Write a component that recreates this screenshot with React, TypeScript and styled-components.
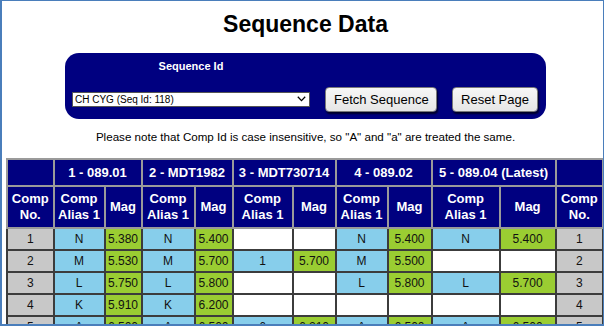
import React from "react";
import styled, { createGlobalStyle } from "styled-components";

const Global = createGlobalStyle`
  html, body { margin: 0; padding: 0; background: #fff; }
  body { font-family: "Liberation Sans", Arial, sans-serif; }
`;

const Frame = styled.div`
  height: 326px;
  box-sizing: border-box;
  border: 2px solid #4a7ebb;
  border-top-width: 1px;
  border-right-width: 1px;
  overflow: hidden;
  font-family: "Liberation Sans", Arial, sans-serif;
`;

const Top = styled.div`
  padding-left: 6px;
  display: flex;
  flex-direction: column;
  align-items: center;
`;

const Title = styled.h1`
  margin: 10px 0 0;
  font-size: 23px;
  line-height: 26px;
  font-weight: bold;
  color: #000;
`;

const Panel = styled.div`
  margin-top: 16px;
  width: 481px;
  box-sizing: border-box;
  background: #000080;
  border-radius: 14px;
  padding: 7px 8px 7px 7px;
  display: grid;
  grid-template-columns: 238px 112px auto;
  column-gap: 15px;
  row-gap: 14px;
  align-items: center;
`;

const Label = styled.div`
  color: #fff;
  font-size: 11px;
  line-height: 13px;
  font-weight: bold;
  text-align: center;
  grid-column: 1;
`;

const SelectWrap = styled.div`
  position: relative;
  grid-column: 1;
  height: 15px;
`;

const Select = styled.select`
  appearance: none;
  width: 100%;
  height: 15px;
  box-sizing: border-box;
  border: 1px solid #555;
  border-radius: 0;
  background: #fff;
  font-family: "Liberation Sans", Arial, sans-serif;
  font-size: 10px;
  line-height: 13px;
  padding: 0 0 0 2px;
  margin: 0;
  color: #000;
  display: block;
`;

const Chevron = styled.svg`
  position: absolute;
  right: 4px;
  top: 4px;
  pointer-events: none;
`;

const Button = styled.button`
  height: 25px;
  box-sizing: border-box;
  padding: 0 8px;
  border: 1px solid #7a7a7a;
  border-radius: 4px;
  background: linear-gradient(#f6f6f6, #e6e6e6);
  box-shadow: 1px 2px 2px rgba(0, 0, 0, 0.7);
  font-family: "Liberation Sans", Arial, sans-serif;
  font-size: 13px;
  color: #000;
  white-space: nowrap;
`;

const Note = styled.p`
  margin: 11px 0 0;
  font-size: 11.6px;
  line-height: 14px;
  color: #000;
`;

const Table = styled.table`
  margin: 14px 0 0 4px;
  width: 596px;
  table-layout: fixed;
  border-collapse: collapse;
  border: 2px solid #9a9a9a;
  font-family: "Liberation Sans", Arial, sans-serif;
`;

const HeadCell = styled.th<{ $tall?: boolean }>`
  background: #000080;
  color: #fff;
  border: 2px solid #9a9a9a;
  font-size: 13px;
  font-weight: bold;
  line-height: 16px;
  height: ${(p) => (p.$tall ? "40px" : "25px")};
  padding: 0;
  text-align: center;
  white-space: nowrap;
`;

type Kind = "num" | "alias" | "mag" | "empty";

const bg: Record<Kind, string> = {
  num: "#c8c8c8",
  alias: "#87ceeb",
  mag: "#9acd32",
  empty: "#ffffff",
};

const Cell = styled.td<{ $kind: Kind }>`
  background: ${(p) => bg[p.$kind]};
  border: 2px solid #3c3c3c;
  font-size: 12px;
  height: 20px;
  padding: 0;
  text-align: center;
  color: #111;
`;

const widths = [46.5, 51, 37, 53, 38, 60, 43, 52, 44, 68, 56, 47.5];

const versions = ["1 - 089.01", "2 - MDT1982", "3 - MDT730714", "4 - 089.02", "5 - 089.04 (Latest)"];

type Pair = [string, string] | null;

const rows: { n: string; pairs: Pair[] }[] = [
  { n: "1", pairs: [["N", "5.380"], ["N", "5.400"], null, ["N", "5.400"], ["N", "5.400"]] },
  { n: "2", pairs: [["M", "5.530"], ["M", "5.700"], ["1", "5.700"], ["M", "5.500"], null] },
  { n: "3", pairs: [["L", "5.750"], ["L", "5.800"], null, ["L", "5.800"], ["L", "5.700"]] },
  { n: "4", pairs: [["K", "5.910"], ["K", "6.200"], null, null, null] },
  { n: "5", pairs: [["A", "6.500"], ["A", "6.500"], ["6", "6.210"], ["A", "6.500"], ["A", "6.500"]] },
];

export default function App() {
  return (
    <Frame>
      <Global />
      <Top>
        <Title>Sequence Data</Title>
        <Panel>
          <Label>Sequence Id</Label>
          <span />
          <span />
          <SelectWrap>
            <Select defaultValue="118">
              <option value="118">CH CYG (Seq Id: 118)</option>
            </Select>
            <Chevron width="9" height="6" viewBox="0 0 9 6">
              <path d="M0.8 0.8 L4.5 4.6 L8.2 0.8" fill="none" stroke="#000" strokeWidth="1.3" />
            </Chevron>
          </SelectWrap>
          <Button>Fetch Sequence</Button>
          <Button>Reset Page</Button>
        </Panel>
        <Note>Please note that Comp Id is case insensitive, so "A" and "a" are treated the same.</Note>
      </Top>
      <Table>
        <colgroup>
          {widths.map((w, i) => (
            <col key={i} style={{ width: `${w}px` }} />
          ))}
        </colgroup>
        <thead>
          <tr>
            <HeadCell />
            {versions.map((v) => (
              <HeadCell key={v} colSpan={2}>
                {v}
              </HeadCell>
            ))}
            <HeadCell />
          </tr>
          <tr>
            <HeadCell $tall>
              Comp
              <br />
              No.
            </HeadCell>
            {versions.map((v) => (
              <React.Fragment key={v}>
                <HeadCell $tall>
                  Comp
                  <br />
                  Alias 1
                </HeadCell>
                <HeadCell $tall>Mag</HeadCell>
              </React.Fragment>
            ))}
            <HeadCell $tall>
              Comp
              <br />
              No.
            </HeadCell>
          </tr>
        </thead>
        <tbody>
          {rows.map((r) => (
            <tr key={r.n}>
              <Cell $kind="num">{r.n}</Cell>
              {r.pairs.map((p, i) => (
                <React.Fragment key={i}>
                  <Cell $kind={p ? "alias" : "empty"}>{p ? p[0] : ""}</Cell>
                  <Cell $kind={p ? "mag" : "empty"}>{p ? p[1] : ""}</Cell>
                </React.Fragment>
              ))}
              <Cell $kind="num">{r.n}</Cell>
            </tr>
          ))}
        </tbody>
      </Table>
    </Frame>
  );
}
